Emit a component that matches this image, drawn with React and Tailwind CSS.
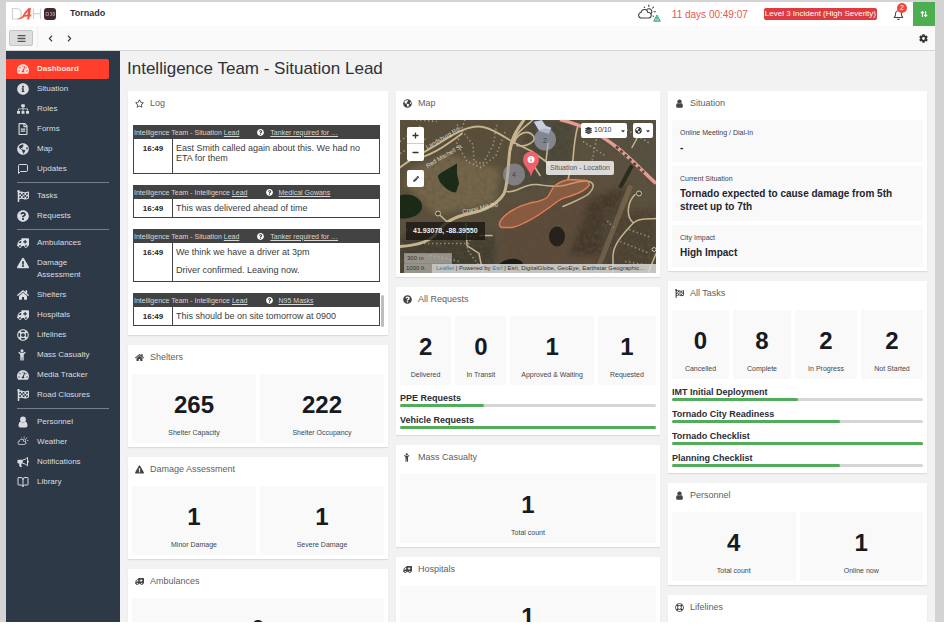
import React from "react";
import {
  FaTachometerAlt, FaInfoCircle, FaSitemap, FaRegFileAlt, FaGlobeAmericas, FaFlagCheckered,
  FaQuestionCircle, FaAmbulance, FaExclamationTriangle, FaHome, FaRegLifeRing,
  FaRegStar, FaRegBell, FaCog, FaBars, FaChevronLeft, FaChevronRight,
  FaPencilAlt, FaLayerGroup, FaCaretDown, FaPlus, FaMinus,
} from "react-icons/fa";
import { WiDayCloudy } from "react-icons/wi";
import { LuMessageSquare, LuBookOpen } from "react-icons/lu";

function PersonIcon({ className }) {
  return (
    <svg viewBox="0 0 12 12" className={className} fill="currentColor" aria-hidden="true">
      <circle cx="6" cy="3.400" r="2.900" />
      <path d="M3.600 5.400C2.200 5.900 1.500 7.400 1.500 9.500c0 1.200.7 2 1.800 2h5.400c1.100 0 1.800-.8 1.800-2 0-2.100-.7-3.600-2.100-4.100-.6.7-1.500 1.100-2.400 1.100s-1.800-.4-2.400-1.100z" />
    </svg>
  );
}

function CasualtyIcon({ className }) {
  return (
    <svg viewBox="0 0 12 12" className={className} fill="currentColor" aria-hidden="true">
      <circle cx="5" cy="1.800" r="1.500" />
      <path d="M2 2.800 3.600 3.700h2.800L8 2.800l.7 1-2 1.600V11.500H5.300V8.300h-.6v3.200H3.300V5.400l-2-1.600z" />
    </svg>
  );
}

function BullhornIcon({ className }) {
  return (
    <svg viewBox="0 0 12 12" className={className} aria-hidden="true">
      <path d="M5.800 3.800H1.600C.9 3.800.4 4.300.4 5v1.200c0 .7.5 1.200 1.200 1.200h.6c-.2 1 0 2.100.5 3.300.8.5 1.700.5 2.400 0-.8-.8-1-1.900-.6-3.300h1.300z" fill="currentColor" />
      <path d="M5.800 3.900C7.500 3.700 9.200 2.800 10.500 1.500v8.300C9.200 8.500 7.500 7.600 5.800 7.400M11.300 4.700v1.800" fill="none" stroke="currentColor" strokeWidth="1" />
    </svg>
  );
}

const navGroups = [
  [
    { label: "Dashboard", icon: FaTachometerAlt, active: true },
    { label: "Situation", icon: FaInfoCircle },
    { label: "Roles", icon: FaSitemap },
    { label: "Forms", icon: FaRegFileAlt },
    { label: "Map", icon: FaGlobeAmericas },
    { label: "Updates", icon: LuMessageSquare },
  ],
  [
    { label: "Tasks", icon: FaFlagCheckered },
    { label: "Requests", icon: FaQuestionCircle },
  ],
  [
    { label: "Ambulances", icon: FaAmbulance, flip: true },
    { label: "Damage Assessment", icon: FaExclamationTriangle },
    { label: "Shelters", icon: FaHome },
    { label: "Hospitals", icon: FaAmbulance, flip: true },
    { label: "Lifelines", icon: FaRegLifeRing },
    { label: "Mass Casualty", icon: CasualtyIcon },
    { label: "Media Tracker", icon: FaTachometerAlt },
    { label: "Road Closures", icon: FaFlagCheckered },
  ],
  [
    { label: "Personnel", icon: PersonIcon },
    { label: "Weather", icon: WiDayCloudy },
    { label: "Notifications", icon: BullhornIcon },
    { label: "Library", icon: LuBookOpen },
  ],
];

const logEntries = [
  { team: "Intelligence Team - Situation", topic: "Tanker required for …", lines: ["East Smith called again about this. We had no ETA for them"], pad: "pb-2.5" },
  { team: "Intelligence Team - Intelligence", topic: "Medical Gowans", lines: ["This was delivered ahead of time"], pad: "pb-1" },
  { team: "Intelligence Team - Situation", topic: "Tanker required for …", lines: ["We think we have a driver at 3pm", "Driver confirmed. Leaving now."], pad: "pb-1.5" },
  { team: "Intelligence Team - Intelligence", topic: "N95 Masks", lines: ["This should be on site tomorrow at 0900"], pad: "pb-1" },
];

function Logo() {
  return (
    <svg viewBox="0 0 46 16" className="h-4 w-[46px]" role="img" aria-label="D4H">
      <path d="M1.500 2.500V13h3.200c3.600 0 5.600-2 5.600-5.300S8.300 2.500 4.700 2.500z" fill="none" stroke="#cfd3d6" strokeWidth="1.200" />
      <path d="M5.500 13.500C9.500 13 12 9.500 13.500 6.500L17.500 2l2.500.3-1 6.200 1.500.2-.4 1.600-1.400.1-.5 3.200h-2l.4-3.100-3.400.3c-2 2-4.500 3.100-7.700 2.700z" fill="#f0563f" />
      <path d="M14 9l2.900-3.700-.5 3.500z" fill="#fff" />
      <path d="M22.500 2.500V13M29.500 2.500V13M22.500 7.700h7" fill="none" stroke="#cfd3d6" strokeWidth="1.200" />
      <rect x="33" y="2" width="12" height="12" rx="3" fill="#43292d" />
      <path d="M35 6.500h2.500v3H35zM39 6.500h1.500v3H39M42 6.500h1.500v3H42z" fill="none" stroke="#a98f90" strokeWidth=".8" />
    </svg>
  );
}

function TopBar() {
  return (
    <header className="flex h-6 items-center bg-white pl-[5px]">
      <Logo />
      <span className="ml-[13px] text-[9px] font-bold text-[#2b2f3a]">Tornado</span>
      <div className="ml-auto flex h-full items-center">
        <WiDayCloudy className="size-5 text-[#444]" />
        <svg viewBox="0 0 8 8" className="-ml-1 mt-2 size-2">
          <path d="M4 1 7.300 7.200H.7z" fill="#9fd8c8" stroke="#3aa58a" strokeWidth="1" />
          <path d="M4 3v2.500" stroke="#2e8b74" strokeWidth=".8" />
        </svg>
        <time className="ml-[11px] text-[10px] text-[#e8584e]">11 days 00:49:07</time>
        <span className="ml-4 rounded-xs bg-[#dc3c40] px-px text-[8px] leading-3 text-white">Level 3 Incident (High Severity)</span>
        <button type="button" aria-label="Alerts" className="relative ml-4 flex items-center">
          <FaRegBell className="size-[11px] text-[#444]" />
          <span className="absolute -top-1.5 left-1 size-2.5 rounded-full bg-[#ee4b3c] text-center text-[7px] leading-2.5 text-white">2</span>
        </button>
        <button type="button" aria-label="Sync" className="ml-[9px] flex h-full w-[22px] items-center justify-center bg-[#4cae50]">
          <svg viewBox="0 0 8 8" className="size-2" fill="none" stroke="#fff" strokeWidth="1.100">
            <path d="M2.400 7V1.600M.8 3.200l1.600-1.700L4 3.200M5.600 1v5.400M4 4.800l1.600 1.700 1.600-1.700" />
          </svg>
        </button>
      </div>
    </header>
  );
}

function ToolBar() {
  return (
    <div className="flex h-[25px] items-center border-b border-[#d4d4d4] bg-[#fafafa] pl-[3px] pr-[7px] text-[#333]">
      <button type="button" aria-label="Toggle menu" className="flex h-4 w-6 items-center justify-center rounded-xs border border-[#c4c4c4] bg-[#dedede]">
        <FaBars className="size-[9px] text-[#555]" />
      </button>
      <div className="ml-1 h-full w-px bg-[#efefef]" />
      <button type="button" aria-label="Back" className="ml-2 p-px"><FaChevronLeft className="size-[7px]" /></button>
      <button type="button" aria-label="Forward" className="ml-2.5 p-px"><FaChevronRight className="size-[7px]" /></button>
      <button type="button" aria-label="Settings" className="ml-auto"><FaCog className="size-[9px]" /></button>
    </div>
  );
}

function Sidebar() {
  return (
    <nav className="w-[114px] shrink-0 bg-[#2d3946] pr-[11px] pt-2 text-[8px] leading-3 text-[#d9dde1]">
      {navGroups.map((group, index) => (
        <ul key={index} className={index > 0 ? "relative mt-[3px] pt-1" : ""}>
          {index > 0 && <li aria-hidden="true" className="absolute inset-x-0 top-0 ml-[11px] h-px bg-[#75808a]" />}
          {group.map(({ label, icon: Icon, active, flip }) => (
            <li key={label}>
              <a href="#" className={active ? "flex rounded-r-xs bg-[#ff3f2b] py-1 pl-[11px] font-bold text-[#ffe0dc]" : "flex py-1 pl-[11px]"}>
                <Icon className={flip ? "size-3 shrink-0 -scale-x-100" : "size-3 shrink-0"} />
                <span className="ml-2 max-w-16">{label}</span>
              </a>
            </li>
          ))}
        </ul>
      ))}
    </nav>
  );
}

function Card({ title, icon: Icon, flip, pad = "pb-1", children }) {
  return (
    <section className={`bg-white px-1 shadow-[0_1px_1px_#dcdcdc] ${pad}`}>
      <h2 className="flex h-[29px] items-center gap-1.5 pb-1 pl-[3px] text-[9px] text-[#5c5f64]">
        <Icon className={flip ? "size-[9px] -scale-x-100 text-[#444]" : "size-[9px] text-[#444]"} />
        {title}
      </h2>
      {children}
    </section>
  );
}

function Tiles({ columns, items }) {
  return (
    <dl className={`grid gap-1 ${columns}`}>
      {items.map(([label, value]) => (
        <div key={label} className="flex h-[69px] flex-col-reverse justify-between bg-[#f9f9fa] pb-1 pt-[17px] text-center">
          <dt className="text-[7px] leading-3 text-[#44464c]">{label}</dt>
          <dd className="text-2xl leading-7 font-bold text-[#171a22]">{value}</dd>
        </div>
      ))}
    </dl>
  );
}

function ProgressList({ items }) {
  return (
    <ul className="grid gap-2 pt-2">
      {items.map(([label, percent]) => (
        <li key={label}>
          <div className="text-[9px] leading-[11px] font-bold text-[#2a2d37]">{label}</div>
          <div role="progressbar" aria-label={label} aria-valuenow={percent} className="h-[3px] rounded-xs bg-[#d6d6d6]">
            <div className="h-full rounded-xs bg-[#52ad5b]" style={{ width: `${percent}%` }} />
          </div>
        </li>
      ))}
    </ul>
  );
}

function Log() {
  return (
    <div className="relative pt-[5px] pb-[5px]">
      <ol className="ml-px mr-1 grid gap-[11px]">
        {logEntries.map((entry, index) => (
          <li key={index} className="border border-[#434343] text-[9px] leading-2.5 text-[#3a3c42]">
            <div className="flex h-[13px] items-center bg-[#434343] text-[7px] whitespace-nowrap text-[#d6d6d6]">
              <span>{entry.team} <a href="#" className="underline">Lead</a></span>
              <FaQuestionCircle className="ml-[18px] size-[7px] text-white" />
              <a href="#" className="ml-1.5 underline">{entry.topic}</a>
            </div>
            <div className="flex">
              <time className="w-[39px] shrink-0 border-r border-[#434343] pt-[5px] text-center text-[8px] font-bold text-[#22252e]">16:49</time>
              <div className={`grid gap-2 pl-[3px] pr-3 pt-1 ${entry.pad}`}>
                {entry.lines.map((line) => <p key={line}>{line}</p>)}
              </div>
            </div>
          </li>
        ))}
      </ol>
      <div className="absolute right-0 bottom-1 h-8 w-[3px] rounded-full bg-[#bdbdbd]" />
    </div>
  );
}

function Satellite() {
  return (
    <svg viewBox="0 0 256 154" preserveAspectRatio="xMidYMid slice" className="size-full" aria-hidden="true">
      <defs>
        <filter id="ground" x="0" y="0" width="100%" height="100%">
          <feTurbulence type="fractalNoise" baseFrequency="0.25" numOctaves="3" seed="6" />
          <feColorMatrix values="0 0 0 0 .1  0 0 0 0 .09  0 0 0 0 .06  1.500 1.500 0 0 -1.200" />
        </filter>
        <filter id="soft"><feGaussianBlur stdDeviation="3" /></filter>
      </defs>
      <rect width="256" height="154" fill="#5b4f3d" />
      <g filter="url(#soft)">
        <path d="M0 0h120l-10 70-15 25-60 5L0 75z" fill="#584d39" />
        <path d="M10 50l40-15 50 15-5 35-60 10-30-30z" fill="#76664a" />
        <path d="M100 90l60-15 50-5 5 40-20 44h-95z" fill="#5b4938" />
        <path d="M190 80l37-14-28 70h-30z" fill="#45392c" />
        <path d="M125 0h50l-5 60-50 10z" fill="#4b4637" />
        <path d="M180 0h76v60l-60-40z" fill="#545040" />
        <path d="M205 90h51v64h-60z" fill="#4d4232" />
        <path d="M0 115h95v39H0z" fill="#423c2f" />
      </g>
      <rect width="256" height="154" filter="url(#ground)" opacity=".5" />
      <path d="M38 56c4-4 9-6 14-9l5-3v10l2 10-3 9c-5 0-9-3-13-7-3-3-5-6-5-10z" fill="#1b2b18" />
      <path d="M0 76c10-3 21 2 22 10S12 100 0 99z" fill="#1a2a17" />
      <ellipse cx="157" cy="117" rx="8" ry="10" fill="#26221b" />
      <path d="M98 146c8-9 22-8 25-2l-8 4-12 1z" fill="#191b18" />
      <path d="M0 22 22 5M0 34 28 18M12 0l25 2M57 5l16 20 1 17 9 2 10-18 4-22M65 0l-8 24 10 18 14 6 15-12 10-26M72 112l-5 18 12 16M6 110l50 3 20 6M20 124h46M30 136l30 6M220 6l30 18M183 22l22 14M198 12l-6 30M214 108l-8-8M229 110l22 8M220 122l30 12M225 142l26 4" fill="none" stroke="#c9c3ad" strokeWidth="1.600" strokeDasharray="1.500 2.500" opacity=".55" />
      <g fill="none" stroke="#c5b48e" strokeLinecap="round">
        <path d="M0 48c14-11 30-18 42-26S67 7 78 7s24 9 34 15l20 10 14 10 8 8M10 40c18-1 36-14 52-26" strokeWidth="1.800" />
        <path d="M124 0c-6 10-12 16-14 30s-2 36-6 44c-5 9-18 17-34 20S44 103 38 112 18 126 0 127" strokeWidth="3" />
        <path d="M133 0c-7 8-20 13-22 30M114 24c3-11 14-14 19-8s-7 12-16 10M178 6c-3 10-4 20-5 34l-5 20M130 40l10 16M146 42l2-18" strokeWidth="1.600" />
        <path d="M107 72c9 2 17-8 29-7 11 1 18 3 28 1s18-6 25-4 4 8 0 12-15 8-26 13" strokeWidth="1.500" />
        <path d="M256 99c-17 1-19 0-26 8s-17 18-17 30v17M248 154l8-20M233 103c-7-6-6-20 2-28M38 94l10 9 10-6M66 104l1 22 12 8 4 20M80 116h12" strokeWidth="1.500" />
        <path d="M230 68c-9 22-14 35-20 50l-14 36" stroke="#8b785a" strokeWidth="5" opacity=".5" />
        <path d="M232 28l12-22" strokeWidth="1.500" />
      </g>
      <path d="M220 68l12-22" stroke="#2a2c1d" strokeWidth="4" />
      <circle cx="38" cy="94" r="2.500" fill="#4b4332" stroke="#d0c29e" />
      <circle cx="239" cy="74" r="2.500" fill="#4b4332" stroke="#d0c29e" />
      <circle cx="254" cy="130" r="2" fill="#4b4332" stroke="#d0c29e" />
      <path d="M160 0c28 7 43 17 57 28s24 22 39 36" fill="none" stroke="#e59d93" strokeWidth="3.500" />
      <path d="M216 27l28 26" stroke="#504638" strokeWidth="2.500" strokeDasharray="3 3" />
      <path d="M133 2l9-2 4 6 6 2-3 7-10-3z" fill="#c7d0db" stroke="#40506a" />
      <circle cx="145" cy="20" r="11" fill="#a0a7b8" opacity=".65" />
      <circle cx="114" cy="55" r="11" fill="#a0a7b8" opacity=".55" />
      <path d="M100 102c3-5 8-9 14-12 6-4 12-5 18-7 6-1 11-2 15-5 4-4 4-9 8-12s9-5 14-6l18 1c2 2 3 3 2 5-4 5-11 8-17 10-5 2-9 2-13 5-5 3-9 7-14 10-7 5-13 9-20 12-5 3-9 4-13 5h-10c-3-1-3-3-2-6z" fill="#c96f49" fillOpacity=".42" stroke="#e07f57" strokeWidth="1.400" />
      <path d="M131 57c-2-8-8-11-8-17a8 8 0 0 1 16 0c0 6-6 9-8 17z" fill="#f0616c" />
      <circle cx="131" cy="40" r="3.500" fill="#fff" />
      <path d="M131 38v.8M131 39.700v2.300" stroke="#ee5b69" strokeWidth="1.200" />
    </svg>
  );
}

function MapPanel() {
  return (
    <div className="relative h-[153px] overflow-hidden text-[7px] text-[#333]">
      <Satellite />
      <span className="absolute left-[143px] top-4 text-[#3d4252]">2</span>
      <span className="absolute left-[112px] top-[50px] text-[#3d4252]">4</span>
      <span className="absolute left-6 top-3.5 -rotate-30 text-[6px] text-[#ded7c4]">Landsburg Rd</span>
      <span className="absolute left-6 top-8 -rotate-30 text-[6px] text-[#ded7c4]">Red Mitchell St</span>
      <span className="absolute left-[62px] top-[84px] -rotate-12 text-[6px] text-[#ded7c4]">Crane Mill Rd</span>
      <div className="absolute left-[7px] top-[7px] grid divide-y divide-[#ccc] rounded-xs bg-white">
        <button type="button" aria-label="Zoom in" className="flex h-[17px] w-[17px] items-center justify-center"><FaPlus className="size-[7px]" /></button>
        <button type="button" aria-label="Zoom out" className="flex h-[17px] w-[17px] items-center justify-center"><FaMinus className="size-[7px]" /></button>
      </div>
      <button type="button" aria-label="Draw" className="absolute left-[7px] top-[50px] flex size-[17px] items-center justify-center rounded-xs bg-white"><FaPencilAlt className="size-1.5" /></button>
      <div className="absolute right-[3px] top-[3px] flex gap-1.5">
        <label className="flex h-[15px] w-[46px] items-center rounded-xs bg-white pl-1">
          <FaLayerGroup className="size-[7px] shrink-0" />
          <select aria-label="Visible layers" className="ml-0.5 w-6 appearance-none bg-transparent text-[7px] outline-none"><option>10/10</option></select>
          <FaCaretDown className="ml-0.5 size-1.5 shrink-0" />
        </label>
        <button type="button" aria-label="Base map" className="flex h-[15px] w-5 items-center justify-between rounded-xs bg-white px-0.5">
          <FaGlobeAmericas className="size-[7px]" />
          <FaCaretDown className="size-1.5" />
        </button>
      </div>
      <div className="absolute left-[146px] top-[41px] rounded-xs bg-[#e9e9e9]/90 px-1 text-[7px] leading-[14px] text-[#555]">Situation - Location</div>
      <div className="absolute left-1.5 top-[102px] bg-[#16140f]/75 px-[7px] text-[7px] leading-[18px] font-bold text-[#eee]">41.93078, -88.39550</div>
      <div className="absolute bottom-0 left-1 text-[6px] leading-[9px]">
        <div className="w-12 border border-[#888] bg-[#b9b7b0]/70 pl-0.5">300 m</div>
        <div className="w-7 bg-[#b9b7b0]/70 pl-0.5">1000 ft</div>
      </div>
      <div className="absolute right-0 bottom-0 left-8 truncate bg-[#d9d9d6]/85 pl-1 text-[6px] leading-[9px]">
        <a href="#" className="text-[#2b83b5]">Leaflet</a> | Powered by <a href="#" className="text-[#2b83b5]">Esri</a> | Esri, DigitalGlobe, GeoEye, Earthstar Geographic…
      </div>
    </div>
  );
}

function Situation() {
  const items = [
    ["Online Meeting / Dial-In", "-"],
    ["Current Situation", "Tornado expected to cause damage from 5th street up to 7th"],
    ["City Impact", "High Impact"],
  ];
  return (
    <dl className="grid gap-1">
      {items.map(([label, value]) => (
        <div key={label} className="bg-[#f9f9fa] py-2 pr-5 pl-2">
          <dt className="text-[7px] leading-[9px] text-[#3f4148]">{label}</dt>
          <dd className="mt-1 text-[10px] leading-[13px] font-bold text-[#22252e]">{value}</dd>
        </div>
      ))}
    </dl>
  );
}

export default function App() {
  return (
    <div className="flex h-screen flex-col overflow-hidden border-b-4 border-white bg-[#d3d3d3] pt-0.5 pr-[9px] pl-1.5 font-['Liberation_Sans',Arial,sans-serif]">
      <TopBar />
      <ToolBar />
      <div className="flex min-h-0 flex-1">
        <Sidebar />
        <main className="min-w-0 flex-1 overflow-hidden bg-[#f2f2f2] px-2">
          <h1 className="-ml-px flex h-10 items-center pb-1 text-[17px] text-[#2e3138]">Intelligence Team - Situation Lead</h1>
          <div className="grid grid-cols-[260fr_264fr_259fr] items-start gap-2">
            <div className="grid gap-2.5">
              <Card title="Log" icon={FaRegStar}><Log /></Card>
              <Card title="Shelters" icon={FaHome}><Tiles columns="grid-cols-2" items={[["Shelter Capacity", 265], ["Shelter Occupancy", 222]]} /></Card>
              <Card title="Damage Assessment" icon={FaExclamationTriangle}><Tiles columns="grid-cols-2" items={[["Minor Damage", 1], ["Severe Damage", 1]]} /></Card>
              <Card title="Ambulances" icon={FaAmbulance} flip><Tiles columns="grid-cols-1" items={[["Total count", 0]]} /></Card>
            </div>
            <div className="grid gap-2.5">
              <Card title="Map" icon={FaGlobeAmericas}><MapPanel /></Card>
              <Card title="All Requests" icon={FaQuestionCircle} pad="pb-1.5">
                <Tiles columns="grid-cols-[51fr_51fr_83fr_58fr]" items={[["Delivered", 2], ["In Transit", 0], ["Approved & Waiting", 1], ["Requested", 1]]} />
                <ProgressList items={[["PPE Requests", 33], ["Vehicle Requests", 100]]} />
              </Card>
              <Card title="Mass Casualty" icon={CasualtyIcon}><Tiles columns="grid-cols-1" items={[["Total count", 1]]} /></Card>
              <Card title="Hospitals" icon={FaAmbulance} flip><Tiles columns="grid-cols-1" items={[["Total count", 1]]} /></Card>
            </div>
            <div className="grid gap-2.5">
              <Card title="Situation" icon={PersonIcon}><Situation /></Card>
              <Card title="All Tasks" icon={FaFlagCheckered} pad="pb-1.5">
                <Tiles columns="grid-cols-[57fr_58fr_62fr_62fr]" items={[["Cancelled", 0], ["Complete", 8], ["In Progress", 2], ["Not Started", 2]]} />
                <ProgressList items={[["IMT Initial Deployment", 50], ["Tornado City Readiness", 67], ["Tornado Checklist", 100], ["Planning Checklist", 67]]} />
              </Card>
              <Card title="Personnel" icon={PersonIcon}><Tiles columns="grid-cols-2" items={[["Total count", 4], ["Online now", 1]]} /></Card>
              <Card title="Lifelines" icon={FaRegLifeRing}><Tiles columns="grid-cols-1" items={[["Total count", 0]]} /></Card>
            </div>
          </div>
        </main>
      </div>
    </div>
  );
}
